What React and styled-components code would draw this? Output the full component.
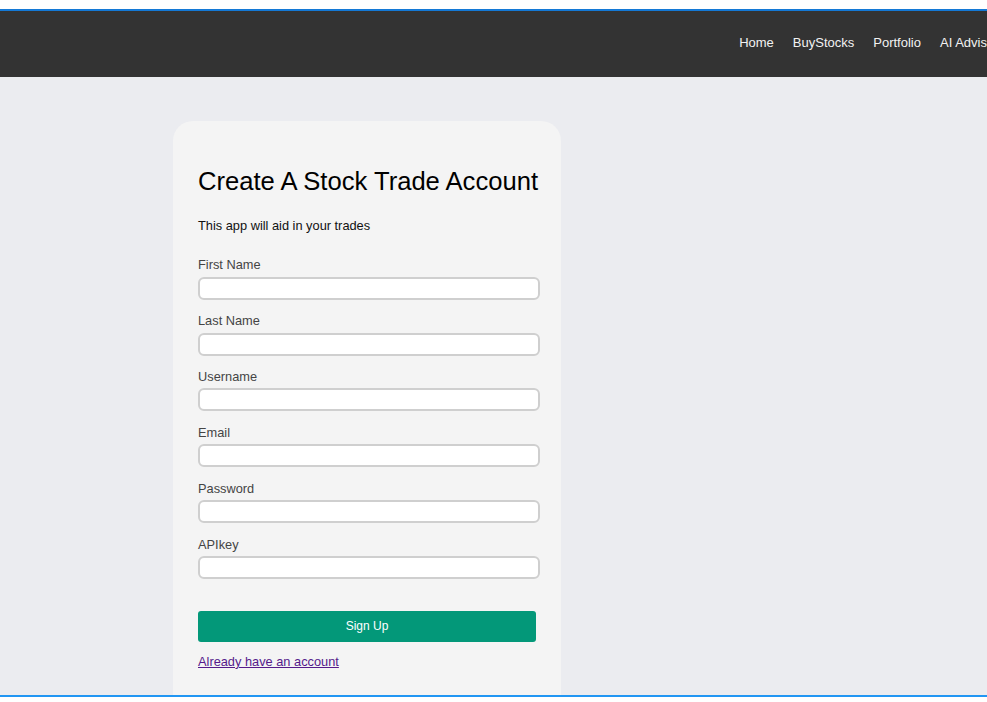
import React from "react";
import styled, { createGlobalStyle } from "styled-components";

const Global = createGlobalStyle`
  html, body { margin: 0; padding: 0; background: #ffffff; overflow: hidden; }
  body { font-family: "Liberation Sans", Arial, sans-serif; }
  * { box-sizing: border-box; }
`;

const Frame = styled.div`
  margin-top: 9px;
  width: 1040px;
  height: 688px;
  border-top: 2px solid #1479d6;
  border-bottom: 2px solid #2196f3;
  background: #ebecf0;
  overflow: hidden;
  display: flex;
  flex-direction: column;
`;

const Nav = styled.nav`
  height: 66px;
  flex: none;
  background: #333333;
  display: flex;
  justify-content: flex-end;
  align-items: center;
  padding: 0 32px 4px 0;
`;

const NavLink = styled.a`
  color: #f2f2f2;
  font-size: 13px;
  text-decoration: none;
  padding: 8px 9.5px;
`;

const Main = styled.main`
  flex: 1;
  padding: 44px 0 0 173px;
`;

const Card = styled.section`
  width: 388px;
  background: #f4f4f4;
  border-radius: 20px;
  padding: 25px 25px 60px;
`;

const Title = styled.h2`
  font-size: 25.6px;
  line-height: 29.4px;
  font-weight: normal;
  white-space: nowrap;
  color: #000;
  margin: 21.4px 0 22.6px;
`;

const Sub = styled.p`
  font-size: 12.8px;
  line-height: 14.7px;
  color: #111;
  margin: 0 0 24.3px;
`;

const Field = styled.div`
  display: flex;
  flex-direction: column;
  margin-bottom: 14.6px;
`;

const Label = styled.label`
  font-size: 12.8px;
  line-height: 14.7px;
  color: #444;
  margin-bottom: 3.6px;
`;

const Input = styled.input`
  width: 342px;
  height: 23px;
  border: 2px solid #cfcfcf;
  border-radius: 6px;
  background: #fff;
  outline: none;
`;

const Button = styled.button`
  display: block;
  margin-top: 31.6px;
  width: 338px;
  height: 31px;
  border: none;
  border-radius: 3px;
  background: #039879;
  color: #fff;
  font-family: "Liberation Sans", Arial, sans-serif;
  font-size: 12px;
`;

const Link = styled.a`
  display: inline-block;
  margin-top: 13px;
  font-size: 12.8px;
  line-height: 14.7px;
  color: #551a8b;
  text-decoration: underline;
`;

const fields = ["First Name", "Last Name", "Username", "Email", "Password", "APIkey"];

export default function App() {
  return (
    <>
      <Global />
      <Frame>
        <Nav>
          <NavLink href="#">Home</NavLink>
          <NavLink href="#">BuyStocks</NavLink>
          <NavLink href="#">Portfolio</NavLink>
          <NavLink href="#">AI Advisor</NavLink>
        </Nav>
        <Main>
          <Card>
            <Title>Create A Stock Trade Account</Title>
            <Sub>This app will aid in your trades</Sub>
            {fields.map((f) => (
              <Field key={f}>
                <Label>{f}</Label>
                <Input type={f === "Password" ? "password" : "text"} />
              </Field>
            ))}
            <Button>Sign Up</Button>
            <div>
              <Link href="#">Already have an account</Link>
            </div>
          </Card>
        </Main>
      </Frame>
    </>
  );
}
